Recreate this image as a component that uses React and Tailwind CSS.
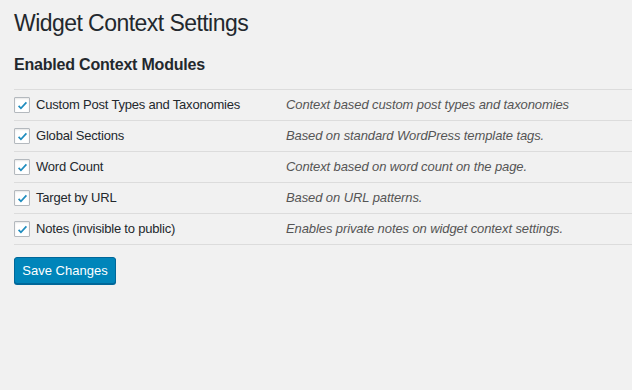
import React from 'react';

const modules = [
  ['Custom Post Types and Taxonomies', 'Context based custom post types and taxonomies'],
  ['Global Sections', 'Based on standard WordPress template tags.'],
  ['Word Count', 'Context based on word count on the page.'],
  ['Target by URL', 'Based on URL patterns.'],
  ['Notes (invisible to public)', 'Enables private notes on widget context settings.'],
];

function Checkbox() {
  return (
    <span className="flex h-4 w-4 items-center justify-center rounded-[1px] border border-[#b4b9be] bg-white shadow-[inset_0_1px_2px_rgba(0,0,0,0.1)]">
      <svg width="13" height="13" viewBox="0 0 20 20">
        <path d="M4 10.5l3.6 3.8L16 5.2" fill="none" stroke="#1e8cbe" strokeWidth="2.6" />
      </svg>
    </span>
  );
}

export default function App() {
  return (
    <div className="min-h-[390px] w-[632px] bg-[#f1f1f1] pl-[14px] pt-[9px] text-[#23282d]" style={{ fontFamily: '"Liberation Sans", Arial, sans-serif' }}>
      <h1 className="text-[23px] leading-[29px] font-normal tracking-[-0.55px]">Widget Context Settings</h1>
      <h2 className="mt-[17px] text-[16px] leading-[20px] font-bold tracking-[-0.2px]">Enabled Context Modules</h2>
      <div className="mt-[14px] border-t border-[#dcdcdc]">
        {modules.map(([label, desc]) => (
          <div key={label} className="flex h-[31px] items-center border-b border-[#dcdcdc] text-[13px]">
            <div className="flex w-[272px] items-center gap-[6px]">
              <Checkbox />
              <span className="tracking-[-0.2px]">{label}</span>
            </div>
            <span className="italic tracking-[-0.1px] text-[#555]">{desc}</span>
          </div>
        ))}
      </div>
      <button className="mt-[12px] h-[27px] w-[102px] rounded-[3px] border border-[#006799] bg-[#0085ba] text-[13px] text-white shadow-[0_1px_0_#006799]">
        Save Changes
      </button>
    </div>
  );
}
